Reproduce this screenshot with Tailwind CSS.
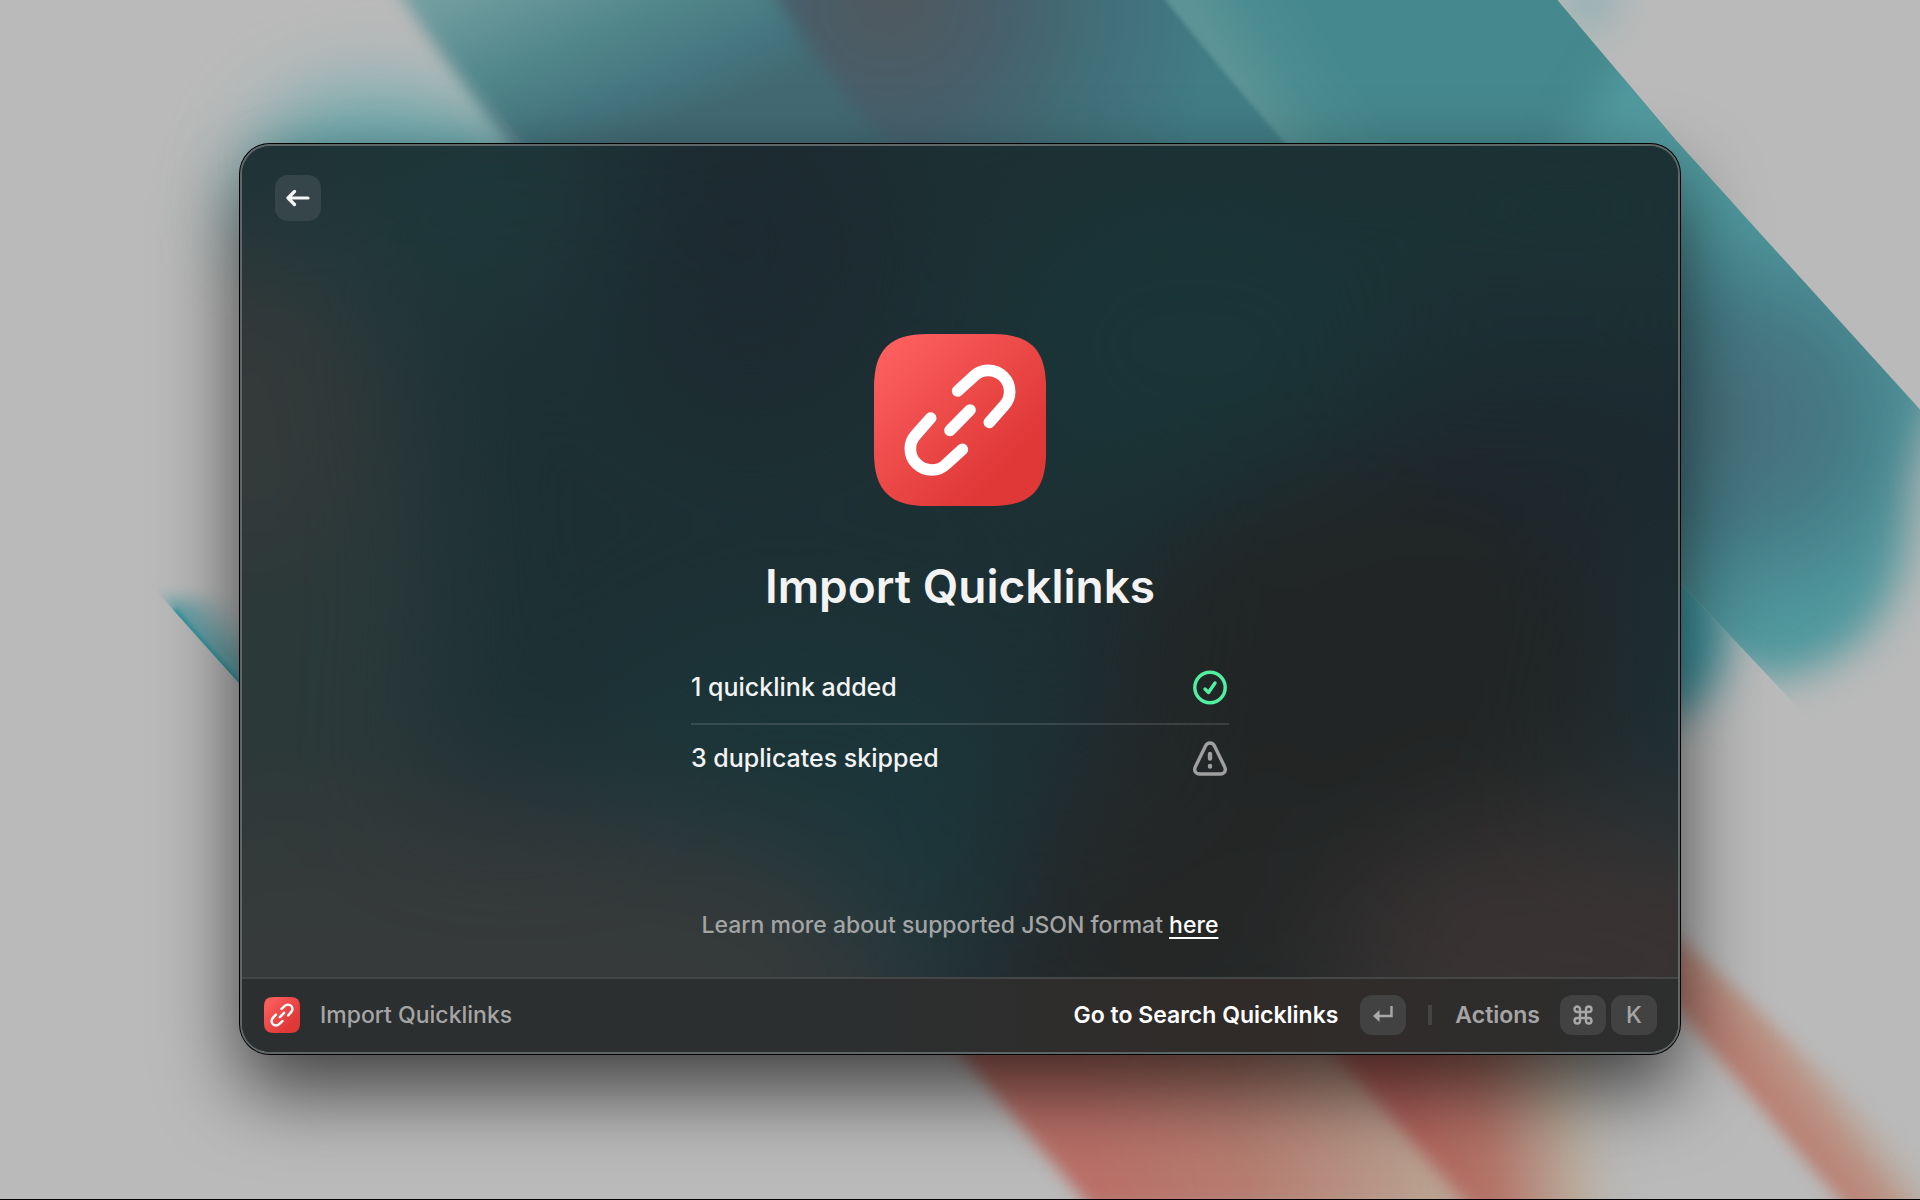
<!DOCTYPE html>
<html lang="en">
<head>
  <meta charset="UTF-8">
  <meta name="viewport" content="width=device-width, initial-scale=1.0">
  <title>Import Quicklinks</title>
  <script src="https://cdn.jsdelivr.net/npm/@tailwindcss/browser@4"></script>
</head>
<body class="relative isolate flex min-h-screen items-center justify-center overflow-hidden border-b border-black bg-[#bababa] pb-0.5 font-['Inter','Liberation_Sans',sans-serif] text-white">

  <!-- Wallpaper -->
  <svg class="absolute inset-0 -z-10 h-full w-full" viewBox="0 0 1920 1200" preserveAspectRatio="xMidYMid slice" color-interpolation-filters="sRGB" aria-hidden="true">
    <defs>
      <filter id="b2" x="-20%" y="-20%" width="140%" height="140%"><feGaussianBlur stdDeviation="2"/></filter>
      <filter id="b8" x="-30%" y="-30%" width="160%" height="160%"><feGaussianBlur stdDeviation="8"/></filter>
      <filter id="b20" x="-60%" y="-100%" width="220%" height="300%"><feGaussianBlur stdDeviation="20"/></filter>
      <filter id="b40" x="-60%" y="-100%" width="220%" height="300%"><feGaussianBlur stdDeviation="36"/></filter>
      <linearGradient id="band1" gradientUnits="userSpaceOnUse" x1="430" y1="-20" x2="520" y2="190">
        <stop offset="0" stop-color="#79a2a4"/><stop offset=".5" stop-color="#51878b"/><stop offset=".8" stop-color="#457680"/><stop offset="1" stop-color="#436a73"/>
      </linearGradient>
      <radialGradient id="band2" gradientUnits="userSpaceOnUse" cx="890" cy="0" r="330">
        <stop offset="0" stop-color="#50585f"/><stop offset=".35" stop-color="#47606b"/><stop offset=".65" stop-color="#426f79"/><stop offset="1" stop-color="#427d85"/>
      </radialGradient>
      <linearGradient id="band3" gradientUnits="userSpaceOnUse" x1="1238" y1="84" x2="1330" y2="30">
        <stop offset="0" stop-color="#5c9396"/><stop offset=".5" stop-color="#4a8c90"/><stop offset="1" stop-color="#45888d"/>
      </linearGradient>
      <radialGradient id="wing" gradientUnits="userSpaceOnUse" cx="1740" cy="420" r="290">
        <stop offset="0" stop-color="#486f7a"/><stop offset=".35" stop-color="#457a85"/><stop offset=".7" stop-color="#4f979c"/><stop offset="1" stop-color="#529a9f"/>
      </radialGradient>
      <linearGradient id="tri" gradientUnits="userSpaceOnUse" x1="205" y1="655" x2="245" y2="618">
        <stop offset="0" stop-color="#3795a0"/><stop offset="1" stop-color="#6b9ea2" stop-opacity="0"/>
      </linearGradient>
      <linearGradient id="red1" gradientUnits="userSpaceOnUse" x1="1100" y1="1180" x2="1420" y2="1130">
        <stop offset="0" stop-color="#b97068"/><stop offset=".45" stop-color="#b57d70"/><stop offset="1" stop-color="#b9a090"/>
      </linearGradient>
      <linearGradient id="red2" gradientUnits="userSpaceOnUse" x1="1410" y1="1160" x2="1640" y2="1130">
        <stop offset="0" stop-color="#b2625b"/><stop offset=".35" stop-color="#b47569"/><stop offset=".7" stop-color="#b9ab9c"/><stop offset="1" stop-color="#bababa" stop-opacity="0"/>
      </linearGradient>
      <linearGradient id="red3" gradientUnits="userSpaceOnUse" x1="1775" y1="1110" x2="1845" y2="1058">
        <stop offset="0" stop-color="#b98073"/><stop offset=".45" stop-color="#ba9486"/><stop offset="1" stop-color="#bab0a2" stop-opacity="0"/>
      </linearGradient>
      <clipPath id="edgeTop"><path d="M0 0H1557L1676 141L1920 410V900L1795 705L1680 583V300H0Z"/></clipPath>
      <clipPath id="underWing"><path d="M1600 498L1680 583L1795 705V900H1600Z"/></clipPath>
      <clipPath id="leftEdge"><path d="M100 530L155 590L250 696V480H100Z"/></clipPath>
      <clipPath id="beforeBand1"><path d="M0 -20H396L560 200V700H0Z"/></clipPath>
    </defs>
    <rect width="1920" height="1200" fill="#bababa"/>
    <g clip-path="url(#beforeBand1)">
      <path d="M240 240Q235 95 360 85Q460 85 560 150V240Z" fill="#74acaf" filter="url(#b40)"/>
      <ellipse cx="390" cy="165" rx="130" ry="24" fill="#63a3a7" filter="url(#b20)"/>
    </g>
    <ellipse cx="1590" cy="0" rx="26" ry="30" fill="#8fb0b2" filter="url(#b20)"/>
    <g clip-path="url(#edgeTop)">
      <path d="M384 -30Q440 60 548 190H1500V-30Z" fill="url(#band1)" filter="url(#b8)"/>
      <path d="M762 -30Q815 75 940 200H1500V-30Z" fill="url(#band2)" filter="url(#b8)"/>
      <path d="M1142 -30Q1210 60 1326 190L1676 260L1740 200V-30Z" fill="url(#band3)" filter="url(#b2)"/>
      <path d="M1620 60L1990 60V340Q1925 400 1912 500Q1905 660 1770 680L1560 600V160Z" fill="url(#wing)" filter="url(#b20)"/>
    </g>
    <g clip-path="url(#underWing)">
      <ellipse cx="1660" cy="620" rx="70" ry="100" fill="#3f929c" filter="url(#b20)"/>
    </g>
    <g clip-path="url(#leftEdge)">
      <path d="M160 600L260 712V600Z" fill="url(#tri)" filter="url(#b8)"/>
      <path d="M172 612L260 712" stroke="#3795a0" stroke-width="12" filter="url(#b2)"/>
    </g>
    <path d="M940 1030L1092 1210H1490L1330 1030Z" fill="url(#red1)" filter="url(#b8)"/>
    <path d="M1312 1030L1477 1215H1700L1580 1030Z" fill="url(#red2)" filter="url(#b8)"/>
    <path d="M1660 990L1852 1215H1980L1660 920Z" fill="url(#red3)" filter="url(#b8)"/>
  </svg>

  <!-- Window -->
  <main class="relative isolate flex w-3/4 flex-col overflow-hidden rounded-[30px] border-2 border-[#5f6667] bg-[#1f2f32] bg-clip-padding shadow-[0_0_0_1px_#000,0_36px_80px_rgb(0_0_0/0.66)]">
    <svg class="absolute inset-0 -z-10 h-full w-full" viewBox="0 0 1440 910" preserveAspectRatio="none" color-interpolation-filters="sRGB" aria-hidden="true">
      <defs>
        <filter id="glow" x="-100%" y="-100%" width="300%" height="300%"><feGaussianBlur stdDeviation="65"/></filter>
      </defs>
      <rect width="1440" height="910" fill="#1d3034"/>
      <g filter="url(#glow)">
        <ellipse cx="0" cy="450" rx="200" ry="400" fill="#2b3939"/>
        <ellipse cx="260" cy="60" rx="200" ry="120" fill="#1e373a"/>
        <ellipse cx="510" cy="100" rx="150" ry="180" fill="#1d2a31"/>
        <ellipse cx="950" cy="200" rx="220" ry="180" fill="#1a3437"/>
        <ellipse cx="1330" cy="60" rx="220" ry="80" fill="#1b3336"/>
        <ellipse cx="1330" cy="320" rx="240" ry="110" fill="#1c2930"/>
        <ellipse cx="1130" cy="520" rx="260" ry="200" fill="#222525"/>
        <ellipse cx="920" cy="800" rx="200" ry="180" fill="#252727"/>
        <ellipse cx="560" cy="620" rx="220" ry="140" fill="#1b3539"/>
        <ellipse cx="0" cy="270" rx="110" ry="130" fill="#363a3a"/>
        <ellipse cx="220" cy="860" rx="480" ry="200" fill="#363a3a"/>
        <ellipse cx="700" cy="740" rx="80" ry="100" fill="#1b373d"/>
        <ellipse cx="1350" cy="820" rx="260" ry="150" fill="#3a3333"/>
      </g>
    </svg>

    <header class="flex px-[33px] pt-[29px]">
      <button type="button" aria-label="Back" class="flex size-[46px] items-center justify-center rounded-[13px] bg-[#364549]">
        <svg class="size-6" viewBox="0 0 24 24" fill="none" stroke="#f5f5f5" stroke-width="3.200" stroke-linecap="round" stroke-linejoin="round" aria-hidden="true">
          <path d="M2 12H22M8.500 5.500L2 12L8.500 18.500"/>
        </svg>
      </button>
    </header>

    <section class="flex flex-col items-center pt-[113px] pb-9">
      <svg class="size-[172px]" viewBox="42 43 516 516" aria-hidden="true">
        <defs>
          <linearGradient id="tile" x1=".05" y1=".1" x2=".75" y2=".8">
            <stop offset="0" stop-color="#fc5f5f"/><stop offset="1" stop-color="#e03737"/>
          </linearGradient>
        </defs>
        <path fill="url(#tile)" d="M42 203C42 90 90 43 202 43H398C510 43 558 90 558 203V399C558 512 510 559 398 559H202C90 559 42 512 42 399Z"/>
        <g id="link" fill="none" stroke="#fff" stroke-width="35" stroke-linecap="round" stroke-linejoin="round">
          <path d="M293 214L341 170C353 158 368 152 384 152C421 152 449 181 449 216C449 232 443 246 433 257L388 308"/>
          <path d="M270 332L330 271"/>
          <path d="M307 389L259 433C247 445 232 451 216 451C179 451 151 422 151 387C151 371 157 357 167 346L212 295"/>
        </g>
      </svg>
      <h1 class="mt-[50px] text-[46px] leading-[60px] font-semibold text-[#f3f3f3]">Import Quicklinks</h1>

      <ul class="mt-[38px] w-[538px] max-w-full text-[25px] font-medium text-[#f3f3f3]">
        <li class="flex h-[71px] items-center justify-between border-b-2 border-white/12">
          <span>1 quicklink added</span>
          <svg class="size-9" viewBox="0 0 36 36" fill="none" stroke="#51f0a1" stroke-width="3.400" stroke-linecap="round" stroke-linejoin="round" aria-hidden="true">
            <circle cx="17" cy="17.500" r="15.200"/>
            <path d="M12 19L15.500 22.500L22 13"/>
          </svg>
        </li>
        <li class="flex h-[71px] items-center justify-between border-b-2 border-transparent">
          <span>3 duplicates skipped</span>
          <svg class="size-9" viewBox="0 0 36 36" fill="none" stroke="#a0a0a0" stroke-width="3.400" stroke-linecap="round" stroke-linejoin="round" aria-hidden="true">
            <path d="M12.500 5C14.500 1 19.500 1 21.500 5L31.500 25.500C33.500 29.500 31.500 33 27.500 33H6.500C2.500 33 .5 29.500 2.500 25.500Z"/>
            <path stroke-width="4.400" d="M17 13V17.500M17 25V25.500"/>
          </svg>
        </li>
      </ul>

      <p class="mt-[113px] text-[23px] leading-8 font-medium text-[#a3a5a5]">Learn more about supported JSON format <a href="#" class="text-white underline decoration-2 underline-offset-4">here</a></p>
    </section>

    <footer class="flex h-[75px] items-center border-t-2 border-[#454646] bg-linear-to-r from-[#2b2f30] from-40% via-[#302b29] via-70% to-[#2d2e2e] pr-[21px] pl-[22px] text-[23px] font-semibold text-[#a5a5a5]">
      <svg class="size-9" viewBox="42 43 516 516" aria-hidden="true">
        <path fill="url(#tile)" d="M42 193C42 83 82 43 192 43H408C518 43 558 83 558 193V409C558 519 518 559 408 559H192C82 559 42 519 42 409Z"/>
        <use href="#link"/>
      </svg>
      <span class="ml-5 font-medium">Import Quicklinks</span>
      <button type="button" class="ml-auto flex items-center gap-[22px] text-white">
        Go to Search Quicklinks
        <kbd class="flex h-10 w-[46px] items-center justify-center rounded-xl bg-[#424242]">
          <svg class="size-5" viewBox="0 0 20 20" fill="none" stroke="#a8a8a8" stroke-width="2.400" aria-hidden="true">
            <path d="M18.500 1V11H5"/>
            <path fill="#a8a8a8" stroke="none" d="M0 11L6.500 5V17Z"/>
          </svg>
        </kbd>
      </button>
      <span class="mr-[23px] ml-[22px] h-5 w-1 bg-[#444]"></span>
      <button type="button" class="flex items-center">
        Actions
        <kbd class="ml-5 flex h-10 w-[46px] items-center justify-center rounded-xl bg-[#424242]">
          <svg class="size-5" viewBox="0 0 20 20" fill="none" stroke="#a8a8a8" stroke-width="2.400" aria-label="Command">
            <path d="M7 7H13V13H7ZM7 7V4.500A2.750 2.750 0 1 0 4.250 7H7M13 7H15.750A2.750 2.750 0 1 0 13 4.250V7M13 13V15.750A2.750 2.750 0 1 0 15.750 13H13M7 13H4.250A2.750 2.750 0 1 0 7 15.750V13"/>
          </svg>
        </kbd>
        <kbd class="ml-[5px] flex h-10 w-[46px] items-center justify-center rounded-xl bg-[#424242] font-['Inter','Liberation_Sans',sans-serif] font-medium">K</kbd>
      </button>
    </footer>
  </main>
</body>
</html>
